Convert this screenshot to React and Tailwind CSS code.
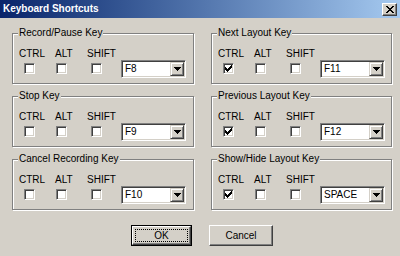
import React from "react";

function Check() {
  const cols = [
    [2, 4], [3, 5], [4, 6], [3, 5], [2, 4], [1, 3], [0, 2],
  ];
  return (
    <svg width="7" height="7" viewBox="0 0 7 7" shapeRendering="crispEdges">
      {cols.map(([a, b], x) => (
        <rect key={x} x={x} y={a} width="1" height={b - a + 1} fill="#000" />
      ))}
    </svg>
  );
}

function CheckBox({ checked }) {
  return (
    <div className="w-[11px] h-[11px] bg-white border border-t-[#808080] border-l-[#808080] border-r-white border-b-white shadow-[inset_1px_1px_0_#404040,inset_-1px_-1px_0_#d4d0c8] flex items-center justify-center">
      {checked ? <Check /> : null}
    </div>
  );
}

function Arrow() {
  return (
    <svg width="7" height="4" viewBox="0 0 7 4" shapeRendering="crispEdges">
      <rect x="0" y="0" width="7" height="1" fill="#000" />
      <rect x="1" y="1" width="5" height="1" fill="#000" />
      <rect x="2" y="2" width="3" height="1" fill="#000" />
      <rect x="3" y="3" width="1" height="1" fill="#000" />
    </svg>
  );
}

function Combo({ value }) {
  return (
    <div className="w-[65px] h-[18px] bg-white border border-t-[#808080] border-l-[#808080] border-r-white border-b-white shadow-[inset_1px_1px_0_#404040,inset_-1px_-1px_0_#d4d0c8] flex p-[1px]">
      <div className="flex-1 flex items-center pl-[2px] text-[10px] leading-[12px]">{value}</div>
      <div className="w-[14px] h-full bg-[#d4d0c8] border border-t-[#d4d0c8] border-l-[#d4d0c8] border-r-[#404040] border-b-[#404040] shadow-[inset_1px_1px_0_#fff,inset_-1px_-1px_0_#808080] flex items-center justify-center">
        <Arrow />
      </div>
    </div>
  );
}

function Group({ title, value, ctrl }) {
  return (
    <div className="relative h-[51px] border border-[#808080] shadow-[inset_1px_1px_0_#fff,1px_1px_0_#fff]">
      <span className="absolute -top-[7px] left-[5px] px-[1px] bg-[#d4d0c8] text-[10px] leading-[12px]">
        {title}
      </span>
      <div className="flex items-start pt-[14px] pl-[6px]">
        <div className="w-[36px] flex flex-col">
          <span className="text-[10px] leading-[12px]">CTRL</span>
          <div className="mt-[3px] ml-[5px]">
            <CheckBox checked={ctrl} />
          </div>
        </div>
        <div className="w-[32px] flex flex-col">
          <span className="text-[10px] leading-[12px]">ALT</span>
          <div className="mt-[3px] ml-[1px]">
            <CheckBox />
          </div>
        </div>
        <div className="w-[34px] flex flex-col">
          <span className="text-[10px] leading-[12px]">SHIFT</span>
          <div className="mt-[3px] ml-[4px]">
            <CheckBox />
          </div>
        </div>
        <div className="mt-[12px]">
          <Combo value={value} />
        </div>
      </div>
    </div>
  );
}

function CloseX() {
  const px = [
    [0, 0], [1, 0], [6, 0], [7, 0],
    [1, 1], [2, 1], [5, 1], [6, 1],
    [2, 2], [3, 2], [4, 2], [5, 2],
    [3, 3], [4, 3],
    [2, 4], [3, 4], [4, 4], [5, 4],
    [1, 5], [2, 5], [5, 5], [6, 5],
    [0, 6], [1, 6], [6, 6], [7, 6],
  ];
  return (
    <svg width="8" height="7" viewBox="0 0 8 7" shapeRendering="crispEdges">
      {px.map(([x, y], i) => (
        <rect key={i} x={x} y={y} width="1" height="1" fill="#000" />
      ))}
    </svg>
  );
}

export default function App() {
  return (
    <div className="w-[400px] h-[256px] bg-[#d4d0c8] overflow-hidden text-black font-['Liberation_Sans',Arial,sans-serif]">
      <div className="h-[18px] flex items-center justify-between pl-[3px] pr-[3px] bg-linear-to-r from-[#0a246a] to-[#a6caf0]">
        <span className="text-white font-bold text-[10px] leading-[12px]">Keyboard Shortcuts</span>
        <div className="w-[15px] h-[13px] bg-[#d4d0c8] border border-t-[#fff] border-l-[#fff] border-r-[#404040] border-b-[#404040] shadow-[inset_-1px_-1px_0_#808080] flex items-center justify-center">
          <CloseX />
        </div>
      </div>
      <div className="grid grid-cols-[182px_181px] gap-x-[17px] pl-[12px] pt-[15px]">
        <div className="flex flex-col gap-[12px]">
          <Group title="Record/Pause Key" value="F8" />
          <Group title="Stop Key" value="F9" />
          <Group title="Cancel Recording Key" value="F10" />
        </div>
        <div className="flex flex-col gap-[12px]">
          <Group title="Next Layout Key" value="F11" ctrl />
          <Group title="Previous Layout Key" value="F12" ctrl />
          <Group title="Show/Hide Layout Key" value="SPACE" ctrl />
        </div>
      </div>
      <div className="flex gap-[17px] pl-[131px] pt-[15px]">
        <div className="w-[61px] h-[21px] border border-black">
          <div className="h-full border border-t-white border-l-white border-r-[#404040] border-b-[#404040] shadow-[inset_-1px_-1px_0_#808080] p-[2px]">
            <div className="h-full border border-dotted border-black flex items-center justify-center text-[10px] leading-[12px]">
              OK
            </div>
          </div>
        </div>
        <div className="w-[64px] h-[21px] border border-t-white border-l-white border-r-[#404040] border-b-[#404040] shadow-[inset_-1px_-1px_0_#808080] flex items-center justify-center text-[10px] leading-[12px]">
          Cancel
        </div>
      </div>
    </div>
  );
}
